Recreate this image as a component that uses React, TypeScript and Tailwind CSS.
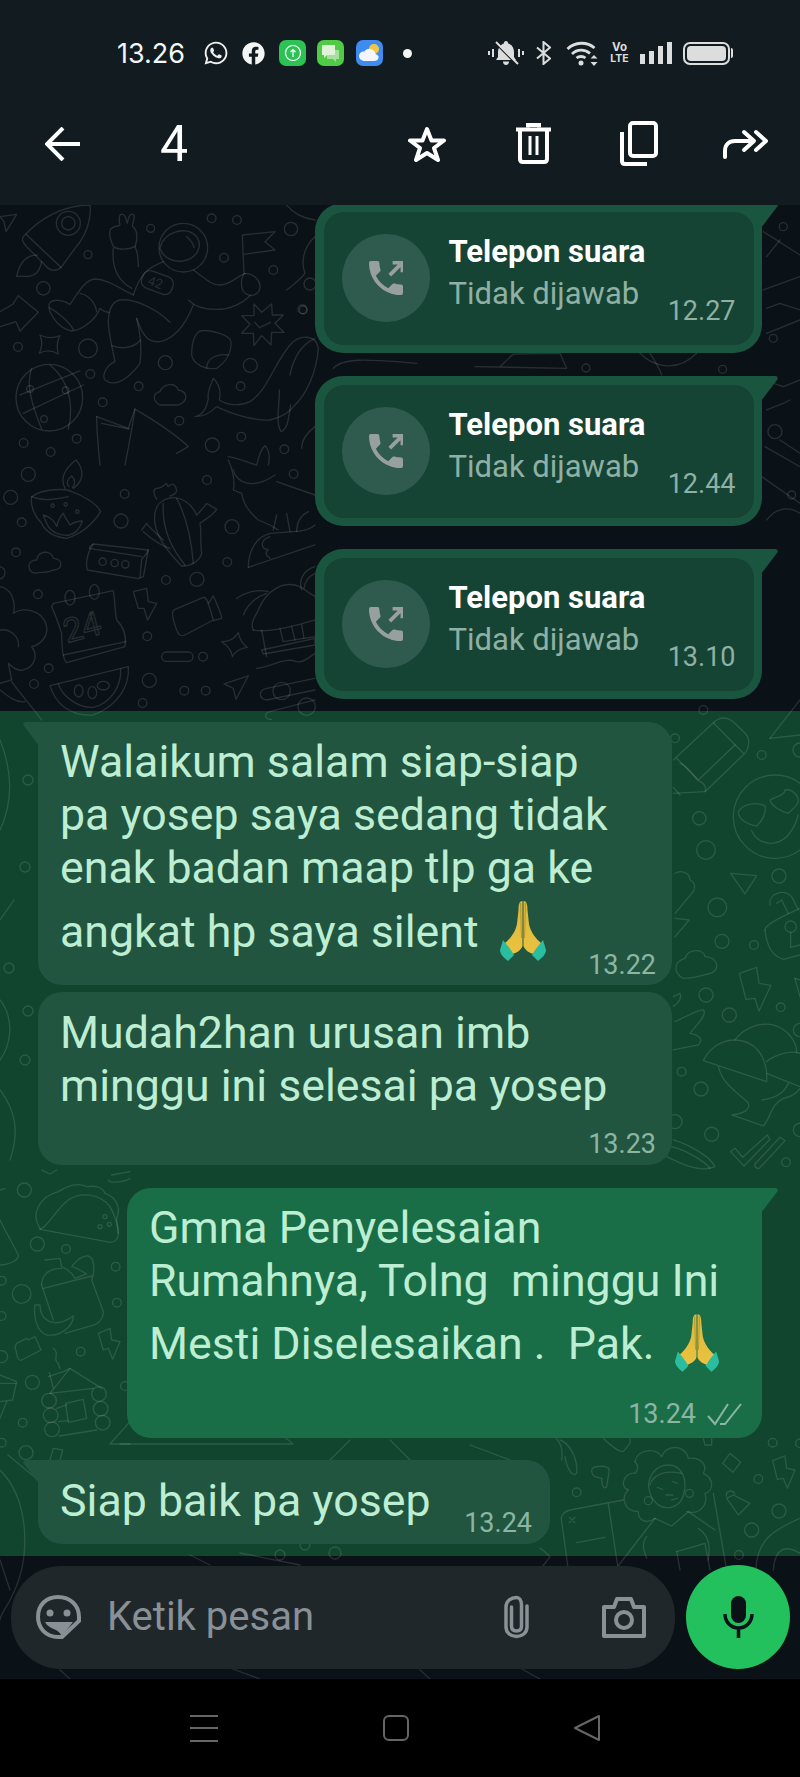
import { FaFacebook, FaWhatsapp } from "react-icons/fa";

type Dot = [number, number, number];

function Dots({ items }: { items: Dot[] }) {
  return (
    <>
      {items.map(([cx, cy, r]) => (
        <circle key={`${cx}-${cy}`} cx={cx} cy={cy} r={r} />
      ))}
    </>
  );
}

function Lines({ items }: { items: string[] }) {
  return (
    <>
      {items.map((d) => (
        <path key={d} d={d} />
      ))}
    </>
  );
}

// the wallpaper, traced crop by crop; each group uses the crop's own 3x coordinates
function Wallpaper() {
  return (
    <svg viewBox="0 205 800 1474" className="absolute inset-0 z-0 h-full w-full fill-none stroke-white/[0.12]" strokeWidth={1.3} strokeLinejoin="round" strokeLinecap="round">
      <g transform="translate(0 205) scale(.3333)" strokeWidth={4}>
        <Dots items={[[264,149,12],[130,250,20],[452,70,12],[635,40,13],[711,45,13],[873,72,20],[672,158,13],[820,195,13],[907,313,13],[54,426,13],[264,430,28],[271,507,13],[496,473,21],[751,481,21],[722,544,13],[416,544,13],[308,592,13],[538,647,13],[637,720,21],[724,695,13],[853,733,13],[230,701,13],[71,714,13],[152,741,13],[205,55,36],[205,55,20],[550,128,73],[148,578,100],[90,552,10],[197,556,10],[132,642,10],[930,237,18]]} />
        <Lines items={[
          "M70 95C120 40 190 0 270 0C275 40 260 90 225 130L185 185C170 200 150 200 135 180L80 125C68 112 65 105 70 95Z",
          "M78 88L183 187",
          "M112 150C85 150 60 165 50 215C70 210 80 220 100 210C115 205 122 185 125 170",
          "M0 35L50 28L18 80L12 50Z",
          "M480 130C490 80 560 60 590 95C610 125 590 160 550 168C520 172 490 160 480 130",
          "M560 95C572 105 580 115 582 128",
          "M340 125C330 100 325 85 332 72C345 60 355 65 360 60C355 40 358 25 368 28C378 30 378 45 382 55C385 35 392 22 402 30C405 45 395 55 398 65C412 75 415 100 405 125C385 135 355 135 340 125Z",
          "M340 130C335 180 350 225 395 250",
          "M405 125C415 145 415 165 415 185",
          "M400 270C420 210 440 190 490 170",
          "M580 195C610 215 630 240 660 240C690 240 710 215 735 205",
          "M735 205C760 205 780 225 780 245C780 265 760 275 745 270C730 265 722 250 725 225C727 215 730 207 735 205",
          "M732 205L727 90L825 80L795 110L825 135L730 148",
          "M565 285C600 320 690 330 750 272",
          "M580 300C560 350 530 400 480 410C450 412 430 402 410 340",
          "M510 352C470 310 400 280 360 285C330 290 325 330 325 350C325 380 335 420 345 470C320 480 305 510 315 525C340 545 380 530 420 475C425 440 425 400 410 340",
          "M335 422C360 432 400 432 422 405",
          "M400 270C350 245 320 222 285 222C255 225 240 255 210 298C190 285 160 280 148 295C140 315 170 370 215 378C250 375 290 340 300 310C310 320 320 322 328 322",
          "M148 308C170 320 210 350 220 375",
          "M240 265C265 270 285 290 290 320",
          "M0 320L38 298L55 272L115 322L60 378L48 350L0 365",
          "M120 390C140 400 160 400 180 392C170 410 170 430 175 447C155 435 135 435 118 445C128 425 128 410 120 390Z",
          "M762 297L785 322L815 297L817 330L850 330L825 355L852 382L815 382L813 420L785 392L762 422L760 385L725 385L750 358L725 332L762 332Z",
          "M765 352L778 368L812 352",
          "M600 378C630 372 690 390 693 410C695 440 680 470 650 490C620 495 580 480 575 450C575 420 580 390 600 378Z",
          "M620 490C620 460 650 445 685 450",
          "M60 570L240 498","M70 625L250 540","M95 490C75 540 100 610 125 672","M150 480C200 520 225 590 205 672",
          "M480 600C460 590 455 565 480 560C490 535 525 530 535 555C565 560 565 590 535 600Z",
          "M585 635C610 630 620 610 625 580C620 560 635 535 640 520C655 535 665 555 658 585C680 600 720 605 750 590C800 560 820 480 870 420C900 385 950 390 955 430C950 500 920 570 880 605C870 620 850 635 810 645C770 648 700 630 650 605C630 625 610 635 585 635Z",
          "M838 555C840 600 825 650 843 680C865 670 865 640 872 600",
          "M870 510C880 460 900 420 945 400",
          "M290 635L385 670L405 612C450 640 520 680 565 725L530 745",
          "M290 635C290 680 295 730 300 780","M405 612C395 680 385 730 375 780","M305 655L388 672",
          "M860 255C880 240 900 225 915 205C905 180 905 130 945 95",
          "M860 0C880 25 910 40 945 45","M905 730C905 700 925 680 945 665",
          "M685 755C720 760 760 780 770 780C775 760 785 730 795 722C808 735 810 760 805 780",
        ]} />
        <rect x="425" y="205" width="95" height="55" rx="22" transform="rotate(20 472 232)" />
        <text x="444" y="248" transform="rotate(20 472 232)" fontSize="40" fontFamily="Roboto, sans-serif" className="fill-white/[0.12] stroke-none">42</text>
      </g>

      <g transform="translate(0 460) scale(.3333)" strokeWidth={4}>
        <Dots items={[[85,43,21],[32,112,21],[65,187,13],[374,102,13],[363,183,21],[621,60,13],[881,42,13],[696,200,21],[682,306,13],[48,277,13],[498,360,13],[591,358,21],[114,403,13],[442,529,13],[609,590,13],[146,625,13],[102,672,13],[448,661,21],[553,692,13],[617,692,13],[428,729,13],[158,137,5],[197,133,5],[232,155,5],[308,305,11],[344,309,11],[376,313,11],[845,693,26],[920,740,26]]} />
        <Lines items={[
          "M95 110C130 85 200 85 215 95C245 105 290 130 302 155C280 190 250 220 200 235C165 232 135 215 125 190C105 170 90 140 95 110Z",
          "M95 110C130 125 165 118 205 110",
          "M195 85C180 55 195 25 228 0C255 30 250 65 220 85","M208 80C195 70 205 55 215 48C228 60 225 75 218 82",
          "M130 165C150 170 165 185 170 200C175 180 185 165 190 160C195 175 205 185 210 195C220 188 235 183 247 183C240 205 225 220 210 225C180 230 150 215 140 190C135 180 132 172 130 165Z",
          "M505 115C470 125 460 150 465 190C470 225 490 260 545 318C575 320 600 300 605 280C600 240 605 215 600 190C620 175 640 165 650 148L620 130C610 145 595 160 590 165C575 130 540 105 505 115Z",
          "M490 130C485 200 510 260 555 315","M530 115C565 180 575 250 580 310","M430 215C470 250 500 262 510 265","M425 210L440 190C450 205 475 225 490 240",
          "M470 118C460 100 458 90 468 85C480 85 490 80 498 70L505 80C515 68 525 70 530 90C530 100 520 105 510 108",
          "M280 252L445 270L430 350L415 356L262 330C255 310 265 270 280 252Z","M445 270C440 285 430 290 425 298L420 352","M280 252C270 258 268 262 268 265L425 290",
          "M105 340C80 335 80 300 110 300C115 270 155 270 160 295C190 295 190 330 160 330C140 340 125 335 105 340Z",
          "M160 430L340 392C345 420 345 460 350 480C370 500 380 530 375 560L200 608C190 600 185 560 185 520C175 490 165 460 155 440Z",
          "M190 585L378 545",
          "M400 395L440 385L445 425L470 430L443 480L432 445L415 445Z",
          "M522 450L610 412C620 410 625 430 640 480L555 525C545 530 535 525 530 510C525 495 510 460 522 450Z",
          "M625 430L640 408C650 430 665 465 665 475L640 482",
          "M665 545C690 545 705 535 715 518C720 540 730 555 742 562C720 565 705 575 697 590C695 570 680 555 665 545Z",
          "M150 677L385 620C390 680 350 740 280 765C210 770 165 730 150 677Z",
          "M175 672C190 715 240 745 280 742C330 730 365 680 362 627",
          "M672 672L745 648L708 718L700 685Z",
          "M710 415C730 400 770 385 805 395","M730 465C745 430 770 410 800 400",
          "M760 510C750 490 765 470 775 450C800 390 850 360 900 380L945 410","M945 480C900 495 800 520 760 510",
          "M785 510L800 590","M840 505L850 545L945 530","M875 500L885 540","M905 495L912 535","M785 570L945 535L945 555L790 582Z","M770 625C820 620 850 590 890 605C910 610 930 590 945 580",
          "M685 0C700 30 705 70 700 90L725 100C730 130 745 155 775 180L810 195L835 210",
          "M830 65L945 105","M700 30C710 70 760 90 825 45",
          "M745 322C745 270 770 230 810 220L880 215C910 215 935 205 945 195","M745 322L945 255",
          "M810 230C780 240 780 265 805 270C790 280 805 290 810 295",
          "M830 165L820 210","M860 160L870 215","M890 215C890 180 905 165 925 155",
          "M945 320C910 330 895 360 905 390","M945 340C925 350 915 365 912 385",
          "M945 655L800 685C775 690 775 715 800 720L945 690",
          "M945 720L810 755C790 760 795 780 815 778",
          "M0 380C30 385 50 420 40 460C70 440 130 450 140 500C145 530 120 555 95 560C115 585 105 620 70 630C50 635 35 620 25 610L35 660L0 670",
          "M0 510C30 505 60 530 55 560","M0 690C25 710 50 730 75 725","M35 665C60 700 95 740 125 780",
          "M0 320C20 325 20 350 0 357",
        ]} />
        <rect x="485" y="576" width="94" height="28" rx="14" />
        <ellipse cx="210" cy="413" rx="15" ry="22" />
        <ellipse cx="283" cy="396" rx="15" ry="22" />
        <ellipse cx="236" cy="693" rx="13" ry="18" />
        <ellipse cx="277" cy="698" rx="13" ry="18" />
        <ellipse cx="310" cy="677" rx="18" ry="13" />
        <text x="190" y="535" transform="rotate(-15 250 500)" fontSize="100" fontFamily="Roboto, sans-serif" strokeWidth={4}>24</text>
      </g>

      <g transform="translate(660 700) scale(.3333)" strokeWidth={4}>
        <Dots items={[[118,355,20],[138,450,28],[305,165,13],[172,622,28],[186,724,21],[282,735,13],[357,528,21],[138,885,21],[208,945,21],[362,922,13],[65,1115,13],[123,1167,21],[155,1303,21],[378,1387,13],[45,115,13],[130,30,13],[420,150,21],[420,990,20],[420,1290,20],[45,1265,21],[345,350,125],[392,680,17]]} />
        <Lines items={[
          "M40 180L160 68C180 50 200 50 220 65L255 100C270 115 270 140 255 160L135 275L40 280",
          "M160 68L250 160","M50 175L115 240L225 135","M60 190C90 200 105 240 120 245C135 250 140 265 135 275","M60 285L40 262",
          "M235 335C250 310 290 305 315 318C320 340 305 365 290 378C265 375 235 360 235 335Z",
          "M330 300C350 290 375 285 375 270C400 265 415 290 415 305C410 320 395 330 385 340C365 335 335 320 330 300Z",
          "M275 392C295 440 380 460 415 345",
          "M212 520L290 527L255 582Z",
          "M330 615C325 580 370 565 395 590L415 630","M315 690C315 670 390 640 420 625","M315 690C320 740 340 770 370 778L420 765","M350 610L365 600L385 640","M392 697L392 742L420 735",
          "M70 835C40 820 40 785 75 775C85 745 130 745 135 770C175 770 185 815 145 822C125 825 105 835 70 835Z",
          "M238 820L290 802L297 850L333 856L297 933L285 895L258 898Z",
          "M130 1082C150 1040 190 1020 225 1020C280 1020 325 1065 320 1145Z",
          "M225 1020C250 985 300 965 340 975C390 990 410 1030 410 1058",
          "M320 1085C345 1065 390 1050 420 1060","M320 1120L420 1160",
          "M175 1100C190 1160 240 1180 265 1210C270 1225 260 1240 215 1245L310 1278C335 1250 330 1215 370 1195C395 1190 410 1180 420 1165",
          "M305 1200C350 1195 375 1175 385 1150",
          "M212 1355L225 1345L248 1372L322 1305L330 1318L252 1398Z",
          "M285 1392L360 1312L375 1322L298 1405C290 1408 282 1400 285 1392Z",
          "M45 520C60 510 90 515 90 540C110 550 105 570 95 580L45 640","M45 655L88 660L45 710",
          "M40 890L60 880C65 890 60 905 40 920",
          "M45 965C80 950 120 925 130 930C145 945 100 985 90 1000C120 1005 130 1020 115 1035L40 1050",
          "M40 1320C90 1335 150 1370 165 1400C120 1420 60 1390 20 1370","M35 1340C75 1350 130 1380 150 1405",
          "M330 115L420 0","M330 115L420 105",
          "M405 835L420 840","M405 835L420 890",
        ]} />
      </g>

      <g transform="translate(0 1170) scale(.3333)" strokeWidth={4}>
        <Dots items={[[73,60,21],[112,222,21],[198,237,13],[65,372,28],[347,290,13],[351,398,13],[242,545,13],[97,637,21],[375,648,13],[68,758,13],[78,848,21],[5,332,13],[5,438,13],[5,818,13],[5,560,18],[315,140,6],[328,163,6],[300,170,6],[147,692,22],[152,736,22],[156,778,22],[297,672,22],[302,716,22],[308,758,22]]} />
        <Lines items={[
          "M120 175C90 130 120 80 175 65C200 50 230 35 260 50C290 45 310 55 315 70C345 80 365 110 350 145L355 190C355 215 335 220 320 215L120 178",
          "M120 178C150 165 165 120 205 90C240 65 300 70 330 110C345 135 355 170 355 190",
          "M135 270L180 265L185 290C205 300 220 315 225 325L260 312C240 300 220 290 215 290C230 270 245 255 265 258C285 265 285 305 275 330L310 425C310 450 290 465 265 470L195 490",
          "M125 345C125 315 145 295 185 295","M125 345L160 450","M130 355L275 318",
          "M105 405L120 405C120 450 160 480 220 438C220 470 180 500 140 495C110 485 100 440 105 405Z",
          "M0 150C20 190 40 225 55 255C55 275 20 285 0 285","M0 60L15 55",
          "M295 490L330 475L335 510L360 515L338 568L325 535L310 540Z",
          "M45 530L50 520L80 505L85 510L105 500L123 540L65 570C60 572 55 570 52 560Z",
          "M160 535C180 550 160 565 170 575C180 585 175 590 180 595",
          "M145 620L190 605L210 595L305 655","M150 670L210 595","M148 608L160 655",
          "M150 670L280 655","M170 715L200 705","M175 755L205 752","M178 798L290 780","M197 700L250 688L260 745L205 757Z",
          "M0 615L50 635L38 690L0 695","M0 640L48 640","M20 695L0 745",
          "M390 755L330 822L390 822",
          "M150 870L160 835L188 840L180 870",
          "M335 15L390 5","M325 30C330 42 380 35 390 25",
          "M125 0L150 12L170 0",
        ]} />
      </g>

      <g transform="translate(540 1430) scale(.3333)" strokeWidth={4}>
        <Dots items={[[110,187,13],[655,147,13],[717,243,21],[635,300,21],[597,375,13],[698,38,13],[325,212,12],[448,190,12],[780,40,13]]} />
        <Lines items={[
          "M285 95C290 60 345 50 365 80C375 45 435 40 445 85C480 80 505 105 490 130C525 145 520 185 495 190C505 225 480 255 440 245",
          "M285 95C300 110 290 125 285 130C255 125 235 170 265 180C240 205 255 245 295 245C295 270 320 285 345 265",
          "M330 190C315 145 345 105 385 105C425 105 445 150 430 195C420 240 355 255 330 190Z",
          "M330 165C340 130 380 120 425 130",
          "M352 172L368 178","M398 155L412 160","M378 195L398 195","M395 210L412 205",
          "M345 265L395 288L445 245L525 300",
          "M225 420L345 265",
          "M250 210L90 240C70 245 60 260 65 275L85 420",
          "M205 222L235 420",
          "M88 262L105 278M105 262L88 278",
          "M110 338L195 322",
          "M520 190L560 420",
          "M475 295C510 320 510 350 505 390",
          "M320 320C305 340 310 360 320 385",
          "M410 365L495 340L510 420","M410 365L420 420",
          "M648 420C650 330 700 300 780 265","M700 420C705 350 740 345 780 370",
          "M548 100L570 70L602 97L578 127Z",
          "M698 92L735 78L740 115L765 120L742 175L730 145L712 148Z",
          "M560 205L580 195L630 220L595 255Z","M560 200C555 185 575 175 585 192",
          "M45 20C60 40 70 50 65 90","M60 30C90 40 115 90 110 130C95 145 80 110 75 80",
          "M155 120C160 105 205 105 208 120L200 170C190 180 185 165 185 145L165 140C155 135 155 125 155 120Z",
          "M190 25C210 45 235 65 250 65L270 40L270 25",
          "M490 25L495 45L515 45L515 25",
          "M0 420L30 380C20 370 10 360 0 355",
        ]} />
      </g>

      {/* strip right of the call bubbles */}
      <g transform="translate(300 200) scale(.3333)" strokeWidth={4}>
        <Dots items={[[1450,80,12],[1425,695,21],[1475,885,12],[858,504,12],[1268,508,12],[10,330,12],[1420,415,12]]} />
        <Lines items={[
          "M1390 95L1500 165","M1400 170L1440 120","M1390 270L1500 230","M1400 325L1440 310L1500 330","M1400 400L1500 360",
          "M1390 540L1450 560L1500 540","M1400 630L1450 610L1470 600","M1395 740L1500 800","M1440 720L1500 760","M1385 830L1500 910","M1400 960C1430 920 1470 920 1500 940",
          "M100 505C130 470 220 480 350 490","M525 500L800 505L780 460L640 462L600 500","M1020 460C1060 500 1130 520 1190 460",
          "M1050 460C1070 490 1080 510 1085 525",
        ]} />
      </g>

      {/* left edge and gaps in the green part */}
      <Lines items={[
        "M0 740C12 770 14 800 0 830","M0 1000C12 1015 14 1040 0 1060","M0 1090C15 1110 20 1130 10 1160","M14 900L0 920","M8 1455L38 1480","M0 1470C30 1500 32 1560 10 1600C5 1610 0 1615 0 1620",
        "M0 1560L10 1590","M120 1444L293 1444L270 1425","M350 1440L330 1460","M390 1440L410 1460","M470 1445L510 1460",
        "M190 1555L210 1565","M240 1553L300 1565","M60 1670L70 1679","M230 1668L260 1679","M420 1670L430 1679","M520 1668L540 1679",
      ]} />
      <Dots items={[[28,780,5],[25,867,5],[9,968,5],[28,1011,5],[25,1060,5],[280,1555,5],[335,1553,6],[180,1572,5],[305,1545,5]]} />
    </svg>
  );
}

function Pray({ className }: { className: string }) {
  return (
    <svg viewBox="0 0 48 61" className={className}>
      <defs>
        <linearGradient id="hand" x1="0" y1="0" x2="0" y2="1">
          <stop offset="0" stopColor="#d9b83e" />
          <stop offset="1" stopColor="#ecc23f" />
        </linearGradient>
      </defs>
      <path d="M23.500 1C20.500 1 19.500 4 19.500 10L18 24C16.500 32 11 39 6 43L9 50L13 54C18 53 22 50 23.500 46Z" fill="url(#hand)" />
      <path d="M24.500 1C27.500 1 28.500 4 28.500 10L30 24C31.500 32 37 39 42 43L39 50L35 54C30 53 26 50 24.500 46Z" fill="url(#hand)" />
      <path d="M21.500 3L22.500 38M26.500 3L25.500 38" stroke="#b9962b" strokeWidth="1" fill="none" />
      <path d="M4 40C7 44 12 49 15 55L9 61C5 58 1 54 1 50Z" fill="#2bbd9f" />
      <path d="M44 40C41 44 36 49 33 55L39 61C43 58 47 54 47 50Z" fill="#2bbd9f" />
    </svg>
  );
}

function CallBubble({ time }: { time: string }) {
  return (
    <div className="relative z-10 h-[150px] w-[447px] rounded-[28px] rounded-tr-none bg-[#1a553f] p-[8.5px]">
      <svg viewBox="0 0 18 26" className="absolute right-[-16px] top-0 h-[26px] w-[18px] fill-[#1a553f]">
        <path d="M0 0H15C17.500 0 18.500 2 17 4L1 25H0Z" />
      </svg>
      <div className="flex h-[133px] items-center rounded-[20px] bg-[#154435] pl-[18px] pr-[18px]">
        <div className="flex h-[88px] w-[88px] items-center justify-center rounded-full bg-[#2f5b4e]">
          <svg viewBox="3 3 18 18" className="h-[34px] w-[34px] fill-[#98a09f] stroke-[#98a09f]">
            <path strokeWidth={0} d="M20 15.500c-1.250 0-2.450-.2-3.570-.57a1 1 0 0 0-1.020.24l-2.200 2.200a15.050 15.050 0 0 1-6.590-6.590l2.200-2.210a.96.96 0 0 0 .25-1A11.400 11.400 0 0 1 8.500 4a1 1 0 0 0-1-1H4a1 1 0 0 0-1 1c0 9.390 7.610 17 17 17a1 1 0 0 0 1-1v-3.500a1 1 0 0 0-1-1z" />
            <path fill="none" strokeWidth={2} d="M14 10.500L20 4.500M15.500 3.800H20.700V9" />
          </svg>
        </div>
        <div className="ml-[19px] flex flex-col pb-[10px]">
          <div className="whitespace-nowrap text-[31px] font-bold leading-[42px] text-white">Telepon suara</div>
          <div className="whitespace-nowrap text-[31px] leading-[42px] text-[#8fb0a4]">Tidak dijawab</div>
        </div>
        <div className="mb-[19px] ml-auto self-end text-[27px] leading-[30px] text-[#8fb0a4]">{time}</div>
      </div>
    </div>
  );
}

function Stamp({ time }: { time: string }) {
  return <div className="text-[27px] leading-[30px] text-[#8cb5a3]">{time}</div>;
}

function InTail() {
  return (
    <svg viewBox="0 0 18 26" className="absolute left-[-15px] top-0 h-[26px] w-[18px] fill-[#21553f]">
      <path d="M18 0H3C.5 0-.5 2 1 4L17 25H18Z" />
    </svg>
  );
}

export default function App() {
  return (
    <div className="flex h-[1777px] w-[800px] flex-col overflow-hidden bg-black font-[family-name:Roboto,sans-serif]">
      <header className="flex h-[205px] shrink-0 flex-col bg-[#121b20] text-white">
        <div className="flex h-[26px] items-center pl-[117px] mt-[40px]">
          <span className="w-[69px] whitespace-nowrap font-[family-name:Inter,sans-serif] text-[27px] leading-none text-[#f4f5f5]">13.26</span>
          <FaWhatsapp className="ml-[17px] h-[26px] w-[26px] text-[#eef0f0]" />
          <FaFacebook className="ml-[13px] h-[23px] w-[23px] text-[#f4f5f5]" />
          <div className="ml-[14px] flex h-[26px] w-[27px] items-center justify-center rounded-[7px] bg-[#2cc354]">
            <svg viewBox="0 0 18 18" className="h-[18px] w-[18px] fill-none stroke-white" strokeWidth={1.2}>
              <circle cx="9" cy="9" r="7.500" />
              <path d="M9 13V5.500M6.500 8L9 5.500L11.500 8" />
            </svg>
          </div>
          <div className="ml-[11px] flex h-[26px] w-[27px] items-center justify-center rounded-[7px] bg-[#4fcb45]">
            <svg viewBox="0 0 27 26" className="h-[26px] w-[27px]">
              <path d="M10 10H22V19H19V22L16 19H10Z" fill="#a7dfa0" />
              <path d="M5 5H18V15H10L7 18V15H5Z" fill="#dff3d8" />
            </svg>
          </div>
          <div className="ml-[12px] flex h-[26px] w-[27px] items-center justify-center rounded-[7px] bg-[#3f8cf0]">
            <svg viewBox="0 0 27 26" className="h-[26px] w-[27px]">
              <circle cx="18" cy="9" r="5" fill="#f4c63f" />
              <path d="M9 21C5 21 3 18.500 3 16C3 13 6 11 8.500 11.500C10 9 13 8 16 9.500C19 11 19.500 13 19.500 14C22 14.500 23 16.500 22.500 18C22 20 20.500 21 18 21Z" fill="#f3f7fd" />
            </svg>
          </div>
          <div className="ml-[20px] h-[9px] w-[9px] rounded-full bg-[#f4f5f5]" />

          {/* right hand status icons */}
          <svg viewBox="0 0 36 24" className="ml-[76px] h-[24px] w-[36px] fill-[#dcdedd] stroke-[#dcdedd]">
            <path strokeWidth={0} d="M18 0C19.500 0 20 1 20.200 2.500C24 3.500 26 7 26 11V16L28 19H8L10 16V11C10 9 10.500 7.500 11.500 6C13 4 14 3 15.800 2.500C16 1 16.500 0 18 0Z" />
            <path strokeWidth={0} d="M15 20.500H21C21 23 19.500 24 18 24C16.500 24 15 23 15 20.500Z" />
            <path fill="none" strokeWidth={2} d="M1 10V14M5 8V16M31 8V16M35 10V14" />
            <path fill="none" stroke="#121b20" strokeWidth={1.500} d="M7 2L29 24" />
            <path fill="none" strokeWidth={2} d="M8 1L30 23" />
          </svg>
          <svg viewBox="0 0 15 24" className="ml-[12px] h-[24px] w-[15px] fill-none stroke-[#dcdedd]" strokeWidth={2}>
            <path d="M1 6.500L14 17.500L7.500 23V1L14 6.500L1 17.500" />
          </svg>
          <svg viewBox="0 0 33 25" className="ml-[15px] h-[25px] w-[33px] fill-none stroke-[#dcdedd]" strokeWidth={2.800}>
            <path d="M1.500 8C9 .5 21 .5 28.500 7" />
            <path d="M6 13C11 8 19 8 24 12.500" />
            <path d="M10.500 17C13 15 17 15 19.500 17" />
            <circle cx="15" cy="22" r="2.500" fill="#dcdedd" stroke="none" />
            <path d="M28 14L31.500 17.500H24.500ZM28 25L24.500 21H31.500Z" fill="#dcdedd" stroke="none" />
          </svg>
          <div className="ml-[12px] flex w-[17px] flex-col items-center font-[family-name:Inter,sans-serif] text-[11.500px] font-bold leading-[11px] text-[#dcdedd]">
            <span>Vo</span>
            <span className="text-[10.500px]">LTE</span>
          </div>
          <div className="ml-[12px] flex h-[22px] w-[32px] items-end justify-between">
            <div className="h-[10px] w-[5px] bg-[#dcdedd]" />
            <div className="h-[13px] w-[5px] bg-[#dcdedd]" />
            <div className="h-[18px] w-[5px] bg-[#dcdedd]" />
            <div className="h-[22px] w-[5px] bg-[#dcdedd]" />
          </div>
          <div className="ml-[11px] flex items-center">
            <div className="h-[23px] w-[47px] rounded-[7px] border-2 border-[#dcdedd] p-[2px]">
              <div className="h-full w-full rounded-[4px] bg-[#dcdedd]" />
            </div>
            <div className="ml-[1px] h-[10px] w-[2px] rounded-r-sm bg-[#dcdedd]" />
          </div>
        </div>

        <div className="mt-[55px] flex h-[45px] items-center pl-[45px]">
          <svg viewBox="0 0 35 34" className="h-[34px] w-[35px] fill-none stroke-white" strokeWidth={4}>
            <path d="M35 17H3M18 1L2 17L18 33" />
          </svg>
          <span className="ml-[80px] w-[28px] text-[50px] leading-none">4</span>
          <svg viewBox="0 0 38 36" className="ml-[220px] h-[36px] w-[38px] fill-none stroke-white" strokeWidth={4} strokeLinejoin="round">
            <path d="M19 3L23.500 14.500H36L26 22L30 34L19 27L8 34L12 22L2 14.500H14.500Z" />
          </svg>
          <svg viewBox="0 0 35 41" className="ml-[70px] h-[41px] w-[35px] fill-none stroke-white" strokeWidth={4}>
            <path d="M4 8V36C4 38 5 39 7 39H28C30 39 31 38 31 36V8" />
            <path d="M0 6.500H35" />
            <path d="M12 4.500V2H23V4.500" />
            <path d="M14 13V32M21 13V32" strokeWidth={3} />
          </svg>
          <svg viewBox="0 0 38 45" className="ml-[69px] h-[45px] w-[38px] fill-none stroke-white" strokeWidth={4} strokeLinejoin="round">
            <rect x="10" y="2" width="26" height="33" rx="3" />
            <path d="M2 11V40C2 42 3 43 5 43H27" />
          </svg>
          <svg viewBox="0 0 45 30" className="ml-[65px] h-[30px] w-[45px] fill-none stroke-white" strokeWidth={4} strokeLinecap="round" strokeLinejoin="round">
            <path d="M2 28V22C2 16 6 12 12 12H29" />
            <path d="M21 3L31 12L21 21" />
            <path d="M33 3L43 12L33 21" />
          </svg>
        </div>
      </header>

      <main className="relative flex min-h-0 flex-1 flex-col overflow-hidden bg-[#0b1217]">
        <Wallpaper />

        <div className="-mt-[2px] flex flex-col gap-[23px] pl-[315px]">
          <CallBubble time="12.27" />
          <CallBubble time="12.44" />
          <CallBubble time="13.10" />
        </div>

        <section className="mt-[12px] flex flex-col bg-[#11452e] pb-[12px] pt-[11px] text-[44.7px] leading-[53px] text-[#bdeed3]">
          <div className="relative z-10 ml-[38px] w-[634px] whitespace-nowrap rounded-[24px] rounded-tl-none bg-[#21553f] pb-[5px] pl-[22px] pr-[16px] pt-[14px]">
            <InTail />
            <div>Walaikum salam siap-siap</div>
            <div>pa yosep saya sedang tidak</div>
            <div>enak badan maap tlp ga ke</div>
            <div className="mt-[11px] flex items-start">
              <span>angkat hp saya silent</span>
              <Pray className="-mb-[2px] -mt-[6px] ml-[20px] h-[61px] w-[48px]" />
            </div>
            <div className="-mt-[9px] flex justify-end">
              <Stamp time="13.22" />
            </div>
          </div>

          <div className="relative z-10 ml-[38px] mt-[7px] w-[634px] whitespace-nowrap rounded-[24px] bg-[#21553f] pb-[6px] pl-[22px] pr-[16px] pt-[15px]">
            <div>Mudah2han urusan imb</div>
            <div>minggu ini selesai pa yosep</div>
            <div className="mt-[16px] flex justify-end">
              <Stamp time="13.23" />
            </div>
          </div>

          <div className="relative z-10 ml-[127px] mt-[23px] w-[635px] whitespace-pre rounded-[24px] rounded-tr-none bg-[#196e47] pb-[9px] pl-[22px] pr-[20px] pt-[14px]">
            <svg viewBox="0 0 18 26" className="absolute right-[-16px] top-0 h-[26px] w-[18px] fill-[#196e47]">
              <path d="M0 0H15C17.500 0 18.500 2 17 4L1 25H0Z" />
            </svg>
            <div>Gmna Penyelesaian</div>
            <div>Rumahnya, Tolng  minggu Ini</div>
            <div className="mt-[10px] flex items-start">
              <span>Mesti Diselesaikan .  Pak.</span>
              <Pray className="-mb-[1px] -mt-[5px] ml-[20px] h-[59px] w-[46px]" />
            </div>
            <div className="mt-[28px] flex items-center justify-end">
              <Stamp time="13.24" />
              <svg viewBox="0 0 35 23" className="ml-[11px] h-[23px] w-[35px] fill-none stroke-[#8cb5a3]" strokeWidth={2}>
                <path d="M1 13L8 21L21 1" />
                <path d="M13 21L18 21L34 1" />
              </svg>
            </div>
          </div>

          <div className="relative z-10 ml-[38px] mt-[22px] flex h-[84px] w-[512px] justify-between whitespace-nowrap rounded-[24px] rounded-tl-none bg-[#21553f] pl-[22px] pr-[18px] pt-[15px]">
            <InTail />
            <span>Siap baik pa yosep</span>
            <div className="mt-[33px]">
              <Stamp time="13.24" />
            </div>
          </div>
        </section>

        <div className="relative z-10 ml-[11px] mt-[9px] flex items-center gap-[11px]">
          <div className="flex h-[103px] w-[664px] items-center rounded-[50px] bg-[#1f272b] pl-[25px] pr-[29px] text-[#8a9196]">
            <svg viewBox="0 0 45 44" className="h-[44px] w-[45px] fill-none stroke-[#8a9196]" strokeWidth={4}>
              <path d="M22 2C34 2 43 10 43 22V26L26 42H22C10 42 2 33 2 22C2 10 10 2 22 2Z" />
              <circle cx="14" cy="18" r="3.500" fill="#8a9196" stroke="none" />
              <circle cx="31" cy="18" r="3.500" fill="#8a9196" stroke="none" />
              <path d="M9 27H37C33 33 29 36 26 41C24 38 22 36 20 35C15 33 11 31 9 27Z" fill="#8a9196" stroke="none" />
            </svg>
            <span className="ml-[26px] text-[40px] leading-none">Ketik pesan</span>
            <svg viewBox="0 0 29 44" className="ml-auto h-[44px] w-[29px] fill-none stroke-[#8a9196]" strokeWidth={3.500} strokeLinecap="round">
              <path d="M9.500 12V31C9.500 35 12 36 14.500 36C17 36 19.500 35 19.500 31V10C19.500 5 17 2.500 14.500 2.500C9 2.500 4 6 4 12V32C4 38 9 41.500 14.500 41.500C20 41.500 25 38 25 32V11" />
            </svg>
            <svg viewBox="0 0 44 41" className="ml-[71px] h-[41px] w-[44px] fill-none stroke-[#8a9196]" strokeWidth={4} strokeLinejoin="round">
              <path d="M2 10H12L15 2H29L32 10H42V39H2Z" />
              <circle cx="22" cy="23" r="8" />
            </svg>
          </div>
          <div className="flex h-[104px] w-[104px] items-center justify-center rounded-full bg-[#22c15e]">
            <svg viewBox="0 0 31 42" className="h-[42px] w-[31px]">
              <rect x="8" y="0" width="15" height="27" rx="7.500" fill="#0b1217" />
              <path d="M2 18C2 26 8 32 15.500 32C23 32 29 26 29 18M15.500 32V42" fill="none" stroke="#0b1217" strokeWidth={3.500} />
            </svg>
          </div>
        </div>
        <div className="h-[11px] shrink-0" />
      </main>

      <nav className="flex h-[98px] shrink-0 items-center bg-black pl-[190px]">
        <div className="flex h-[27px] w-[28px] flex-col justify-between">
          <div className="h-[2px] bg-[#666]" />
          <div className="h-[2px] bg-[#666]" />
          <div className="h-[2px] bg-[#666]" />
        </div>
        <div className="ml-[165px] h-[26px] w-[26px] rounded-[6px] border-2 border-[#666]" />
        <svg viewBox="0 0 26 26" className="ml-[165px] h-[26px] w-[26px] fill-none stroke-[#666]" strokeWidth={2} strokeLinejoin="round">
          <path d="M25 1V25L1 13Z" />
        </svg>
      </nav>
    </div>
  );
}
